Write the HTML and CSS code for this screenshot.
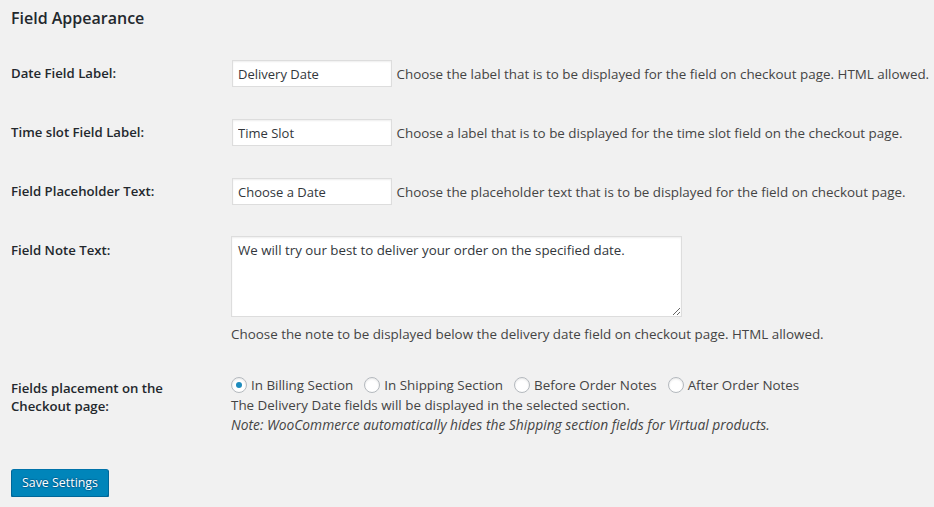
FILE: index.html
```html
<!DOCTYPE html>
<html lang="en">
<head>
<meta charset="utf-8">
<title>Field Appearance</title>
<link rel="stylesheet" href="styles.css">
</head>
<body>
<div class="wrap">
  <h2 class="title">Field Appearance</h2>
  <div class="form-table">
    <div class="row">
      <div class="th">Date Field Label:</div>
      <div class="td"><input class="text" type="text" value="Delivery Date"> <span class="desc">Choose the label that is to be displayed for the field on checkout page. HTML allowed.</span></div>
    </div>
    <div class="row">
      <div class="th">Time slot Field Label:</div>
      <div class="td"><input class="text" type="text" value="Time Slot"> <span class="desc">Choose a label that is to be displayed for the time slot field on the checkout page.</span></div>
    </div>
    <div class="row">
      <div class="th">Field Placeholder Text:</div>
      <div class="td"><input class="text" type="text" value="Choose a Date"> <span class="desc">Choose the placeholder text that is to be displayed for the field on checkout page.</span></div>
    </div>
    <div class="row">
      <div class="th">Field Note Text:</div>
      <div class="td">
        <textarea class="note">We will try our best to deliver your order on the specified date.</textarea>
        <p class="desc block">Choose the note to be displayed below the delivery date field on checkout page. HTML allowed.</p>
      </div>
    </div>
    <div class="row">
      <div class="th">Fields placement on the Checkout page:</div>
      <div class="td">
        <div class="radios">
          <label class="radio"><input type="radio" name="placement" checked><span>In Billing Section</span></label>
          <label class="radio"><input type="radio" name="placement"><span>In Shipping Section</span></label>
          <label class="radio"><input type="radio" name="placement"><span>Before Order Notes</span></label>
          <label class="radio"><input type="radio" name="placement"><span>After Order Notes</span></label>
        </div>
        <p class="desc line">The Delivery Date fields will be displayed in the selected section.</p>
        <p class="desc line"><em>Note: WooCommerce automatically hides the Shipping section fields for Virtual products.</em></p>
      </div>
    </div>
  </div>
  <div class="submit"><button class="button-primary" type="button">Save Settings</button></div>
</div>
</body>
</html>
```

FILE: styles.css
```css
html, body {
  margin: 0;
  padding: 0;
  background: #f1f1f1;
}

body {
  font-family: "Open Sans", "Noto Sans", sans-serif;
  font-size: 13.4px;
  color: #444;
}

.wrap {
  padding: 0 0 0 11px;
  white-space: nowrap;
}

.title {
  margin: 6px 0 0;
  font-size: 16px;
  line-height: 25px;
  font-weight: 600;
  color: #23282d;
}

.form-table {
  margin-top: 13px;
}

.row {
  display: grid;
  grid-template-columns: 220px 1fr;
}

.th {
  width: 200px;
  padding: 20px 20px 20px 0;
  font-size: 13.2px;
  font-weight: 600;
  line-height: 18px;
  color: #23282d;
  white-space: normal;
}

.td {
  padding: 15px 0 15px 0;
  line-height: 20px;
}

.text {
  box-sizing: border-box;
  width: 160px;
  height: 27px;
  margin: 1px;
  padding: 0 5px;
  border: 1px solid #ddd;
  background: #fff;
  box-shadow: inset 0 1px 2px rgba(0, 0, 0, 0.07);
  font-family: inherit;
  font-size: 13px;
  color: #32373c;
  vertical-align: middle;
  outline: none;
}

.desc {
  color: #444;
  vertical-align: middle;
}

.note {
  display: block;
  box-sizing: border-box;
  width: 451px;
  height: 81px;
  margin: 0;
  padding: 4px 6px;
  border: 1px solid #ddd;
  background: #fff;
  box-shadow: inset 0 1px 2px rgba(0, 0, 0, 0.07);
  font-family: inherit;
  font-size: 13.3px;
  line-height: 19px;
  color: #32373c;
  resize: both;
  outline: none;
}

.desc.block {
  display: block;
  margin: 7px 0 0;
  line-height: 20px;
}

.radios {
  display: flex;
  align-items: center;
  gap: 11px;
  height: 21px;
}

.radio {
  display: flex;
  align-items: center;
  gap: 4px;
  color: #444;
}

.radio input {
  appearance: none;
  -webkit-appearance: none;
  box-sizing: border-box;
  width: 16px;
  height: 16px;
  margin: 0;
  border: 1px solid #b4b9be;
  border-radius: 50%;
  background: #fff;
  box-shadow: inset 0 1px 2px rgba(0, 0, 0, 0.1);
  display: grid;
  place-items: center;
}

.radio input:checked::before {
  content: "";
  width: 6px;
  height: 6px;
  border-radius: 50%;
  background: #1e8cbe;
}

.desc.line {
  display: block;
  margin: 0;
  line-height: 20px;
}

.desc em {
  font-style: italic;
  font-size: 13.8px;
}

.submit {
  margin-top: 19px;
}

.button-primary {
  box-sizing: border-box;
  height: 28px;
  padding: 0 10px 1px;
  border: 1px solid #0073aa;
  border-color: #0073aa #006799 #006799;
  border-radius: 3px;
  background: #0085ba;
  box-shadow: 0 1px 0 #006799;
  color: #fff;
  font-family: inherit;
  font-size: 12.4px;
  line-height: 26px;
  text-shadow: 0 -1px 1px #006799, 1px 0 1px #006799, 0 1px 1px #006799, -1px 0 1px #006799;
  cursor: pointer;
}
```
